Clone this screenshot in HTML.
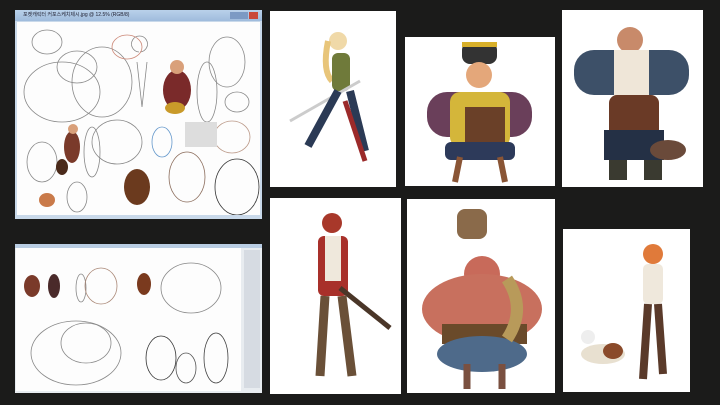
<!DOCTYPE html>
<html><head><meta charset="utf-8"><style>
body{margin:0;width:720px;height:405px;background:#1b1b1a;position:relative;overflow:hidden;font-family:"Liberation Sans","Noto Sans CJK KR",sans-serif}
.p{position:absolute;background:#fff}
</style></head><body>
<div class="p" style="left:15px;top:10px;width:247px;height:209px;background:#c9d9ea">
 <div style="position:absolute;left:0;top:0;width:247px;height:11px;background:linear-gradient(#b9d1ea,#9fbbdc);font-size:5px;color:#223;line-height:11px;padding-left:8px;box-sizing:border-box">포켓캐릭터 커포스케치제시.jpg @ 12.5% (RGB/8)</div>
 <div style="position:absolute;right:4px;top:2px;width:9px;height:7px;background:#c9483a"></div>
 <div style="position:absolute;right:14px;top:2px;width:18px;height:7px;background:#7c9ac4"></div>
 <div style="position:absolute;left:2px;top:12px;width:243px;height:193px;background:#fdfdfd">
  <svg width="243" height="193">
   <g fill="none" stroke="#888" stroke-width="0.8">
    <ellipse cx="45" cy="70" rx="38" ry="30"/><ellipse cx="85" cy="60" rx="30" ry="35"/><ellipse cx="60" cy="45" rx="20" ry="16"/><ellipse cx="30" cy="20" rx="15" ry="12"/>
    <path d="M120 40 l5 45 M130 40 l-5 45 M122 30 a8 8 0 1 1 1 0"/>
    <ellipse cx="210" cy="40" rx="18" ry="25"/><ellipse cx="190" cy="70" rx="10" ry="30"/><ellipse cx="220" cy="80" rx="12" ry="10"/>
    <ellipse cx="100" cy="120" rx="25" ry="22"/><ellipse cx="215" cy="115" rx="18" ry="16" stroke="#b98"/>
    <ellipse cx="220" cy="165" rx="22" ry="28" stroke="#333"/><ellipse cx="170" cy="155" rx="18" ry="25" stroke="#8a6b5a"/>
    <ellipse cx="25" cy="140" rx="15" ry="20"/><ellipse cx="60" cy="175" rx="10" ry="15"/><ellipse cx="75" cy="130" rx="8" ry="25"/>
    <ellipse cx="110" cy="25" rx="15" ry="12" stroke="#c87"/><ellipse cx="145" cy="120" rx="10" ry="15" stroke="#69c"/>
   </g>
   <ellipse cx="160" cy="68" rx="14" ry="20" fill="#7a2a2a"/><circle cx="160" cy="45" r="7" fill="#d9a07a"/><ellipse cx="158" cy="86" rx="10" ry="6" fill="#c99a2a"/>
   <ellipse cx="55" cy="125" rx="8" ry="16" fill="#7a3a2a"/><circle cx="56" cy="107" r="5" fill="#d9a07a"/><ellipse cx="45" cy="145" rx="6" ry="8" fill="#4a2a1a"/>
   <ellipse cx="120" cy="165" rx="13" ry="18" fill="#6b3a1e"/><ellipse cx="30" cy="178" rx="8" ry="7" fill="#c97a4a"/>
   <rect x="168" y="100" width="32" height="25" fill="#ddd"/>
  </svg>
 </div>
</div>
<div class="p" style="left:15px;top:244px;width:247px;height:149px;background:#e8ecf0">
 <div style="position:absolute;left:0;top:0;width:247px;height:4px;background:#b9cde3"></div>
 <div style="position:absolute;left:1px;top:4px;width:225px;height:143px;background:#fdfdfd">
  <svg width="225" height="143">
   <ellipse cx="16" cy="38" rx="8" ry="11" fill="#7a3a2a"/><ellipse cx="38" cy="38" rx="6" ry="12" fill="#4a2a2a"/>
   <ellipse cx="128" cy="36" rx="7" ry="11" fill="#7a3a1e"/>
   <g fill="none" stroke="#888" stroke-width="0.8">
    <ellipse cx="65" cy="40" rx="5" ry="14"/><ellipse cx="85" cy="38" rx="16" ry="18" stroke="#a87"/>
    <ellipse cx="175" cy="40" rx="30" ry="25"/><ellipse cx="60" cy="105" rx="45" ry="32"/><ellipse cx="70" cy="95" rx="25" ry="20"/>
    <ellipse cx="145" cy="110" rx="15" ry="22" stroke="#333"/><ellipse cx="200" cy="110" rx="12" ry="25" stroke="#444"/><ellipse cx="170" cy="120" rx="10" ry="15" stroke="#555"/>
   </g>
  </svg>
 </div>
 <div style="position:absolute;right:2px;top:6px;width:16px;height:138px;background:#d6dbe2"></div>
</div>
<div class="p" style="left:270px;top:11px;width:126px;height:176px">
 <svg width="126" height="176"><circle cx="68" cy="30" r="9" fill="#f0d9a8"/><path d="M58 30 q-6 30 4 40" stroke="#e8c57a" stroke-width="6" fill="none"/><rect x="62" y="42" width="18" height="38" rx="6" fill="#6f7a3a"/><path d="M20 110 L90 70" stroke="#ccc" stroke-width="3"/><path d="M68 80 l-30 55 M80 80 l15 60" stroke="#2b3a55" stroke-width="8"/><path d="M75 90 l20 60" stroke="#9b2a2a" stroke-width="5"/></svg>
</div>
<div class="p" style="left:405px;top:37px;width:150px;height:149px">
 <svg width="150" height="149"><rect x="57" y="5" width="35" height="22" rx="8" fill="#333"/><rect x="57" y="5" width="35" height="5" fill="#d8b02a"/><circle cx="74" cy="38" r="13" fill="#e4a77a"/><rect x="22" y="55" width="105" height="45" rx="20" fill="#6a3f5a"/><rect x="45" y="55" width="60" height="55" rx="10" fill="#d4b63a"/><rect x="60" y="70" width="40" height="40" fill="#6a4028"/><rect x="40" y="105" width="70" height="18" rx="6" fill="#2d3a5a"/><path d="M55 120 l-5 25 M95 120 l5 25" stroke="#8a5535" stroke-width="6"/></svg>
</div>
<div class="p" style="left:562px;top:10px;width:141px;height:177px">
 <svg width="141" height="177"><circle cx="68" cy="30" r="13" fill="#c88a6a"/><rect x="12" y="40" width="115" height="45" rx="20" fill="#3d5068"/><rect x="52" y="40" width="35" height="70" fill="#efe6d8"/><rect x="47" y="85" width="50" height="45" rx="8" fill="#6a3a26"/><rect x="42" y="120" width="60" height="30" fill="#243045"/><ellipse cx="106" cy="140" rx="18" ry="10" fill="#6a4a3a"/><rect x="47" y="150" width="18" height="20" fill="#3a3a30"/><rect x="82" y="150" width="18" height="20" fill="#3a3a30"/></svg>
</div>
<div class="p" style="left:270px;top:198px;width:131px;height:196px">
 <svg width="131" height="196"><circle cx="62" cy="25" r="10" fill="#a8382a"/><rect x="48" y="38" width="30" height="60" rx="6" fill="#a8302a"/><rect x="55" y="38" width="16" height="45" fill="#efe8dc"/><path d="M70 90 l50 40" stroke="#4a3628" stroke-width="5"/><path d="M55 98 l-5 80 M72 98 l10 80" stroke="#6a5038" stroke-width="9"/></svg>
</div>
<div class="p" style="left:407px;top:199px;width:148px;height:194px">
 <svg width="148" height="194"><rect x="50" y="10" width="30" height="30" rx="8" fill="#8a6a4a"/><circle cx="75" cy="75" r="18" fill="#c86a5a"/><ellipse cx="75" cy="110" rx="60" ry="35" fill="#c8705e"/><rect x="35" y="125" width="85" height="20" fill="#6a4a2a"/><ellipse cx="75" cy="155" rx="45" ry="18" fill="#4e6a8a"/><path d="M100 80 q20 30 0 60" stroke="#b89a5a" stroke-width="12" fill="none"/><path d="M60 165 l0 25 M95 165 l0 25" stroke="#7a5040" stroke-width="7"/></svg>
</div>
<div class="p" style="left:563px;top:229px;width:127px;height:163px">
 <svg width="127" height="163"><circle cx="90" cy="25" r="10" fill="#e07a3a"/><rect x="80" y="35" width="20" height="40" rx="5" fill="#efe8dc"/><path d="M85 75 l-5 75 M95 75 l5 70" stroke="#5a3a2a" stroke-width="8"/><ellipse cx="40" cy="125" rx="22" ry="10" fill="#e8e0d0"/><ellipse cx="50" cy="122" rx="10" ry="8" fill="#8a4a2a"/><circle cx="25" cy="108" r="7" fill="#eee"/></svg>
</div>
</body></html>
